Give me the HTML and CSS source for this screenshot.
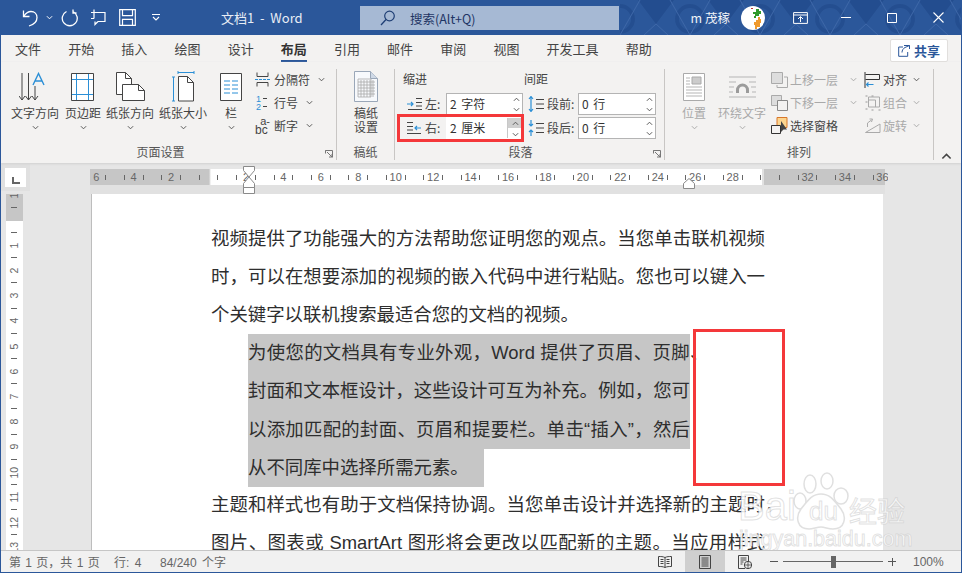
FILE: index.html
```html
<!DOCTYPE html>
<html lang="zh-CN">
<head>
<meta charset="utf-8">
<title>文档1 - Word</title>
<link rel="stylesheet" href="styles.css">
</head>
<body>
<svg class="defs" width="0" height="0" aria-hidden="true">
  <symbol id="chev" viewBox="0 0 8 5"><path d="M1 1l3 3 3-3" fill="none" stroke="currentColor" stroke-width="1.1"/></symbol>
  <symbol id="chevup" viewBox="0 0 8 5"><path d="M1 4l3-3 3 3" fill="none" stroke="currentColor" stroke-width="1.1"/></symbol>
  <symbol id="launch" viewBox="0 0 8 8"><path d="M.5.5h7v7M.5.5v3M.5.5h3M2 2l5 5M7 4v3H4" fill="none" stroke="#777" stroke-width="1"/></symbol>
</svg>
<div class="app">
  <header class="titlebar">
    <svg class="hexes" width="342" height="35" viewBox="0 0 342 35" aria-hidden="true">
      <defs>
        <pattern id="hex" width="70" height="35" patternUnits="userSpaceOnUse" x="0">
          <path d="M18 0l18 24 18-24z" fill="#234d8f"/>
          <circle cx="0" cy="19" r="13" fill="none" stroke="#244e90" stroke-width="4"/>
          <circle cx="70" cy="19" r="13" fill="none" stroke="#244e90" stroke-width="4"/>
          <path d="M0 35l20-35M70 35L50 0M36 24l-12 11M36 24l12 11" stroke="#3d67a8" stroke-width="1" fill="none"/>
        </pattern>
      </defs>
      <rect width="342" height="35" fill="url(#hex)"/>
    </svg>
    <div class="qat">
      <svg class="q-undo" width="17" height="18" viewBox="0 0 17 18"><path d="M1.5 1.5v6h6M2 7c2-3 4-4.500 7-4.500 3.500 0 6 2.500 6 6 0 4-3 7-8 8.500" fill="none" stroke="#fff" stroke-width="1.3"/></svg>
      <svg class="q-chev" width="7" height="5"><use href="#chev"/></svg>
      <svg class="q-redo" width="18" height="18" viewBox="0 0 18 18"><path d="M11.500 2.500A7.500 7.500 0 1 1 5 2.500M5 .5v3.500H1.500" fill="none" stroke="#fff" stroke-width="1.3" transform="matrix(-1 0 0 1 18 0)"/></svg>
      <svg class="q-touch" width="16" height="17" viewBox="0 0 16 17"><path d="M4 3.500h11v9H8M5 12.500v3l3-3M4 .5v9M1 3.500h3M1 9.500h3" fill="none" stroke="#fff" stroke-width="1.200"/></svg>
      <svg class="q-save" width="17" height="17" viewBox="0 0 17 17"><path d="M.7.7h15.600v15.600H.7zM3.500.7v6h10v-6M3.500 16.300v-6h10v6" fill="none" stroke="#fff" stroke-width="1.200"/></svg>
      <svg class="q-more" width="8" height="7" viewBox="0 0 8 7"><path d="M0 .5h8M1 3l3 3 3-3" fill="none" stroke="#fff" stroke-width="1.100"/></svg>
    </div>
    <div class="doc-title">文档1&nbsp; -&nbsp; Word</div>
    <div class="search">
      <svg width="15" height="16" viewBox="0 0 15 16"><circle cx="9.500" cy="6" r="4.800" fill="none" stroke="#1f3f75" stroke-width="1.200"/><path d="M6 9.500L1 15" stroke="#1f3f75" stroke-width="1.300"/></svg>
      <span>搜索(Alt+Q)</span>
    </div>
    <div class="win">
      <span class="user">m 茂稼</span>
      <svg class="avatar" width="24" height="24" viewBox="0 0 24 24">
        <circle cx="12" cy="12" r="12" fill="#fff"/>
        <path d="M10 2h2v1h-2z" fill="#c0392b"/>
        <path d="M15 3h3v2h2v3h-2v2h-3v2h-2v-2h1V8h-2V6h3z" fill="#2f9a2b"/>
        <path d="M17 11h2v2h1v4h-1v4h-3v2h-2v-4h-1v-3h2v-2h2z" fill="#ef9a2d"/>
      </svg>
      <button class="wbtn"><svg width="15" height="12" viewBox="0 0 15 12"><path d="M.6.6h13.800v10.800H.6zM.6 3h13.800M7.500 10V5M5 7l2.500-2.500L10 7" fill="none" stroke="#fff"/></svg></button>
      <button class="wbtn"><svg width="10" height="1" viewBox="0 0 10 1"><path d="M0 .5h10" stroke="#fff"/></svg></button>
      <button class="wbtn"><svg width="10" height="10" viewBox="0 0 10 10"><path d="M.5.5h9v9h-9z" fill="none" stroke="#fff"/></svg></button>
      <button class="wbtn"><svg width="11" height="11" viewBox="0 0 11 11"><path d="M.5.500l10 10M10.500.500l-10 10" stroke="#fff" stroke-width="1.100"/></svg></button>
    </div>
  </header>

  <nav class="tabs">
    <span>文件</span><span>开始</span><span>插入</span><span>绘图</span><span>设计</span><span class="on">布局</span><span>引用</span><span>邮件</span><span>审阅</span><span>视图</span><span>开发工具</span><span>帮助</span>
    <button class="share">
      <svg width="12" height="13" viewBox="0 0 12 13"><path d="M6 1.500h5.500v3.500M5 3H.7v9.300h9V8M11.500 1.500L7 3.500c-2 1-3 3-3 5" fill="none" stroke="#2b579a" stroke-width="1"/></svg>
      共享
    </button>
  </nav>

  <section class="ribbon">
    <div class="group g-page">
      <div class="body">
        <div class="big b1">
          <div class="ico"><svg width="32" height="30" viewBox="0 0 32 30"><path d="M3 1v27M0 24l3 4 3-4M9.500 1v27M6.500 24l3 4 3-4M16 14v14M13 24l3 4 3-4" fill="none" stroke="#444" stroke-width="1"/><path d="M15 12L20.500.5 26 12M17 8h7" fill="none" stroke="#2b8fd6" stroke-width="1.400" transform="translate(-1 1)"/></svg></div>
          <div class="lbl">文字方向</div><svg class="chev" width="7" height="5"><use href="#chev"/></svg>
        </div>
        <div class="big b2">
          <div class="ico"><svg width="24" height="28" viewBox="0 0 24 28"><path d="M.5.500h22v27H.5z" fill="#fff" stroke="#444"/><path d="M5.500 1v26M17.500 1v26M1 6.500h21M1 21.500h21" stroke="#2b8fd6" fill="none"/></svg></div>
          <div class="lbl">页边距</div><svg class="chev" width="7" height="5"><use href="#chev"/></svg>
        </div>
        <div class="big b3">
          <div class="ico"><svg width="29" height="29" viewBox="0 0 29 29"><path d="M.5.500h9l6 6v16H.5z" fill="#fff" stroke="#444"/><path d="M9.500.5v6h6" fill="none" stroke="#444"/><path d="M6.500 12.500h16l6 6v10h-22z" fill="#fff" stroke="#444"/><path d="M22.500 12.500v6h6" fill="none" stroke="#444"/></svg></div>
          <div class="lbl">纸张方向</div><svg class="chev" width="7" height="5"><use href="#chev"/></svg>
        </div>
        <div class="big b4">
          <div class="ico"><svg width="23" height="31" viewBox="0 0 23 31"><path d="M6 1.500h16M6 0v3M22 0v3M1.500 6v24M0 6h3M0 30h3" stroke="#2b8fd6" fill="none"/><path d="M6.500 5.500h9l6 6v18.500h-15z" fill="#fff" stroke="#444"/><path d="M15.500 5.500v6h6" fill="none" stroke="#444"/></svg></div>
          <div class="lbl">纸张大小</div><svg class="chev" width="7" height="5"><use href="#chev"/></svg>
        </div>
        <div class="big b5">
          <div class="ico"><svg width="22" height="28" viewBox="0 0 22 28"><path d="M.5.500h21v27H.5z" fill="#fff" stroke="#444"/><path d="M4 8h6M12 8h6M4 12h6M12 12h6M4 16h6M12 16h6M4 20h6M12 20h6" stroke="#2b8fd6"/></svg></div>
          <div class="lbl">栏</div><svg class="chev" width="7" height="5"><use href="#chev"/></svg>
        </div>
        <div class="smalls s-page">
          <div class="small"><svg width="15" height="15" viewBox="0 0 15 15"><path d="M2 .5v4h11v-4M2 14.500v-4h11v4" fill="none" stroke="#444"/><path d="M0 7.500h15" stroke="#2b8fd6" stroke-dasharray="3 1"/></svg><span>分隔符</span><svg class="chev" width="7" height="5"><use href="#chev"/></svg></div>
          <div class="small"><svg class="num" width="15" height="16" viewBox="0 0 15 16"><text x="1" y="7" class="numt">1</text><text x="1" y="15" class="numt">2</text><path d="M8 3.500h4M8 11.500h4" stroke="#444"/></svg><span>行号</span><svg class="chev" width="7" height="5"><use href="#chev"/></svg></div>
          <div class="small"><span class="abc"><i>a-</i><b>bc</b></span><span>断字</span><svg class="chev" width="7" height="5"><use href="#chev"/></svg></div>
        </div>
      </div>
      <div class="glabel gl-page">页面设置</div>
      <svg class="launch" width="8" height="8"><use href="#launch"/></svg>
    </div>

    <div class="group g-paper">
      <div class="body">
        <div class="big b6">
          <div class="ico"><svg width="24" height="31" viewBox="0 0 24 31"><path d="M.5.500h16l7 7v23H.5z" fill="#f7f9fc" stroke="#9aa7b8"/><path d="M16.500.5v7h7" fill="#cfd9e6" stroke="#9aa7b8"/><path d="M4 8h13v18H4zM4 11h17M4 14h17M4 17h17M4 20h17M4 23h17M7 9v17M10 9v17M13 9v17M16 9v17M19 9v17" fill="none" stroke="#a9a9a9" stroke-width=".8"/></svg></div>
          <div class="lbl">稿纸<br>设置</div>
        </div>
      </div>
      <div class="glabel">稿纸</div>
    </div>

    <div class="group g-para">
      <div class="body">
        <div class="para">
          <div class="phead p-a">缩进</div><div class="phead">间距</div>
          <div class="field f-l">
            <svg width="15" height="12" viewBox="0 0 15 12"><path d="M9 .5h6M9 4.500h6M9 8h6M1 11.500h14" stroke="#444" fill="none"/><path d="M0 6h6M4 4l2 2-2 2" stroke="#2b8fd6" fill="none" stroke-width="1.200"/></svg>
            <span class="flab">左:</span>
            <div class="input"><span>2 字符</span><div class="spin"><svg width="7" height="5"><use href="#chevup"/></svg><svg width="7" height="5"><use href="#chev"/></svg></div></div>
          </div>
          <div class="field f-r">
            <svg width="17" height="16" viewBox="0 0 17 16"><path d="M9 3.500h8M9 8h8M9 12.500h8" stroke="#444"/><path d="M4 1v14M2 3l2-2.500L6 3M2 13l2 2.500L6 13" stroke="#2b8fd6" fill="none" stroke-width="1.200"/></svg>
            <span class="flab">段前:</span>
            <div class="input"><span>0 行</span><div class="spin"><svg width="7" height="5"><use href="#chevup"/></svg><svg width="7" height="5"><use href="#chev"/></svg></div></div>
          </div>
          <div class="field f-l marked">
            <svg width="15" height="12" viewBox="0 0 15 12"><path d="M0 .5h6M0 4.500h6M0 8h6M0 11.500h14" stroke="#444" fill="none"/><path d="M14 6H8M10 4L8 6l2 2" stroke="#2b8fd6" fill="none" stroke-width="1.200"/></svg>
            <span class="flab">右:</span>
            <div class="input"><span>2 厘米</span><div class="spin active"><svg class="up" width="7" height="5"><use href="#chevup"/></svg><svg width="7" height="5"><use href="#chev"/></svg></div></div>
          </div>
          <div class="field f-r">
            <svg width="17" height="16" viewBox="0 0 17 16"><path d="M9 3.500h8M9 8h8M9 12.500h8" stroke="#444"/><path d="M4 0v6M2 4l2 2 2-2M4 10v6M2 12l2-2 2 2" stroke="#2b8fd6" fill="none" stroke-width="1.200"/></svg>
            <span class="flab">段后:</span>
            <div class="input"><span>0 行</span><div class="spin"><svg width="7" height="5"><use href="#chevup"/></svg><svg width="7" height="5"><use href="#chev"/></svg></div></div>
          </div>
        </div>
      </div>
      <div class="glabel gl-para">段落</div>
      <svg class="launch" width="8" height="8"><use href="#launch"/></svg>
    </div>

    <div class="group g-arr">
      <div class="body">
        <div class="big b7 dis">
          <div class="ico"><svg width="22" height="28" viewBox="0 0 22 28"><path d="M.5.500h21v27H.5z" fill="#fff" stroke="#aaa"/><path d="M9 4h9v7H9z" fill="#ccc" stroke="#aaa"/><path d="M3 5h4M3 8h4M3 11h4M3 14h16M3 17h16M3 20h16M3 23h16" stroke="#b5b5b5"/></svg></div>
          <div class="lbl">位置</div><svg class="chev" width="7" height="5"><use href="#chev"/></svg>
        </div>
        <div class="big b8 dis">
          <div class="ico"><svg width="29" height="24" viewBox="0 0 29 24"><path d="M1 2h27M1 7h7M21 7h7M1 12h5M23 12h5M1 17h4M24 17h4M1 22h27" stroke="#b5b5b5"/><path d="M8 18v-3a6.500 6.500 0 0 1 13 0v3h-3v-3a3.500 3.500 0 0 0-7 0v3z" fill="#9b9b9b"/></svg></div>
          <div class="lbl">环绕文字</div><svg class="chev" width="7" height="5"><use href="#chev"/></svg>
        </div>
        <div class="smalls s-arr1">
          <div class="small dis"><svg width="17" height="16" viewBox="0 0 17 16"><path d="M.5.500h11v11H.5z" fill="#ddd" stroke="#aaa"/><path d="M13 5h3.500v10.500H6V13" fill="none" stroke="#aaa"/></svg><span>上移一层</span><svg class="chev" width="7" height="5"><use href="#chev"/></svg></div>
          <div class="small dis"><svg width="17" height="16" viewBox="0 0 17 16"><path d="M.5.500h10v10H.5z" fill="#ddd" stroke="#aaa"/><path d="M6.500 5.500h10v10h-10z" fill="#f3f2f1" stroke="#888"/></svg><span>下移一层</span><svg class="chev" width="7" height="5"><use href="#chev"/></svg></div>
          <div class="small"><svg width="17" height="17" viewBox="0 0 17 17"><path d="M6 .5h10v10H6z" fill="#fcd58f" stroke="#d8772a"/><path d="M.5 8.500h9v8h-9z" fill="#f3f2f1" stroke="#333"/><path d="M10 4v11l2.500-2.500H16z" fill="#444"/></svg><span>选择窗格</span></div>
        </div>
        <div class="smalls s-arr2">
          <div class="small"><svg width="17" height="16" viewBox="0 0 16 16"><path d="M.5 0v16" stroke="#333"/><path d="M1 2.500h14v5H1" fill="none" stroke="#333"/><path d="M9 12.500H2M4 10.500l-2 2 2 2" fill="none" stroke="#2b8fd6" stroke-width="1.200"/></svg><span>对齐</span><svg class="chev" width="7" height="5"><use href="#chev"/></svg></div>
          <div class="small dis"><svg width="17" height="16" viewBox="0 0 16 16"><path d="M4 2h11v10H4z" fill="none" stroke="#aaa"/><path d="M4 5h7v7" fill="none" stroke="#aaa"/><path d="M1 1h2M1 7h2M1 14h2M7 1h2M7 15h2M14 15h2" stroke="#999"/></svg><span>组合</span><svg class="chev" width="7" height="5"><use href="#chev"/></svg></div>
          <div class="small dis"><svg width="17" height="15" viewBox="0 0 16 15"><path d="M1 14.500L15.500 6v8.500zM3 9V5l4-3M5 1L8 1l-1 3" fill="none" stroke="#aaa"/></svg><span>旋转</span><svg class="chev" width="7" height="5"><use href="#chev"/></svg></div>
        </div>
      </div>
      <div class="glabel">排列</div>
    </div>
    <svg class="collapse" width="11" height="7"><use href="#chevup"/></svg>
  </section>

  <main class="workspace">
    <div class="rulerbar">
      <div class="corner"><span class="tabmark"></span></div>
      <div class="hruler">
        <div class="rcell">6</div><div class="rcell">4</div><div class="rcell">2</div><div class="rcell"></div><div class="rcell">2</div><div class="rcell">4</div><div class="rcell">6</div><div class="rcell">8</div><div class="rcell">10</div><div class="rcell">12</div><div class="rcell">14</div><div class="rcell">16</div><div class="rcell">18</div><div class="rcell">20</div><div class="rcell">22</div><div class="rcell">24</div><div class="rcell">26</div><div class="rcell">28</div><div class="rcell"></div><div class="rcell">32</div><div class="rcell">34</div><div class="rcell">36</div>
      </div>
      <svg class="marker-l" width="12" height="28" viewBox="0 0 12 28"><path d="M.5.500h11v4L6 11 .5 4.500zM6 11l5.500 6.500v4h-11v-4zM.5 21.500h11v6H.5z" fill="#fff" stroke="#8a8a8a"/></svg>
      <svg class="marker-r" width="12" height="11" viewBox="0 0 12 11"><path d="M6 .5l5.500 5v5H.5v-5z" fill="#fff" stroke="#8a8a8a"/></svg>
    </div>
    <div class="docrow">
      <div class="vcol">
        <div class="vruler">
          <div class="vcell"><span>1</span></div><div class="vcell"><span></span></div><div class="vcell"><span>1</span></div><div class="vcell"><span>2</span></div><div class="vcell"><span>3</span></div><div class="vcell"><span>4</span></div><div class="vcell"><span>5</span></div><div class="vcell"><span>6</span></div><div class="vcell"><span>7</span></div><div class="vcell"><span>8</span></div><div class="vcell"><span>9</span></div><div class="vcell"><span>10</span></div><div class="vcell"><span>11</span></div><div class="vcell"><span>12</span></div><div class="vcell"><span>13</span></div>
        </div>
      </div>
      <article class="page">
        <p class="ln just">视频提供了功能强大的方法帮助您证明您的观点。当您单击联机视频</p>
        <p class="ln just">时，可以在想要添加的视频的嵌入代码中进行粘贴。您也可以键入一</p>
        <p class="ln">个关键字以联机搜索最适合您的文档的视频。</p>
        <div class="sel">
          <p class="hl just">为使您的文档具有专业外观，Word 提供了页眉、页<span class="nb">脚<span class="hang">、</span></span></p>
          <p class="hl just">封面和文本框设计，这些设计可互为补充。例如，您可</p>
          <p class="hl just">以添加匹配的封面、页眉和提要栏。单击“插入”，然后</p>
          <p class="hl last">从不同库中选择所需元素。</p>
        </div>
        <p class="ln just">主题和样式也有助于文档保持协调。当您单击设计并选择新的主题<span class="nb">时<span class="hang">，</span></span></p>
        <p class="ln just">图片、图表或 SmartArt 图形将会更改以匹配新的主题。当应用样式</p>
        <div class="redbox"></div>
      </article>
    </div>
    <div class="watermark" aria-hidden="true">
      <svg class="paw" width="58" height="62" viewBox="0 0 58 62"><g fill="#fff" stroke="#d6d6d6" stroke-width="1.500"><ellipse cx="17" cy="12" rx="6" ry="9"/><ellipse cx="34" cy="9" rx="6" ry="8"/><ellipse cx="7" cy="29" rx="6" ry="8"/><ellipse cx="48" cy="24" rx="7" ry="8"/><path d="M28 22c10 0 14 8 20 15 6 8 4 20-8 20-5 0-8-2-12-2s-8 2-12 2c-12 0-14-12-8-20 6-7 10-15 20-15z"/></g></svg>
      <span class="wm-bai">Bai</span><span class="wm-du">du</span><span class="wm-cn">经验</span>
      <span class="wm-url">jingyan.baidu.com</span>
    </div>
  </main>

  <footer class="status">
    <span class="st1">第 1 页，共 1 页</span><span class="st2">行: 4</span><span class="st3">84/240 个字</span>
    <div class="views">
      <span class="view"><svg width="14" height="12" viewBox="0 0 14 12"><path d="M7 1.500C5 .5 3 .5.500.5v10c2.500 0 4.500 0 6.500 1 2-1 4-1 6.500-1V.5C11 .5 9 .5 7 1.500zM7 1.500v10M2.500 3.500h3M2.500 5.500h3M2.500 7.500h3M8.500 3.500h3M8.500 5.500h3M8.500 7.500h3" fill="none" stroke="#444"/></svg></span>
      <span class="view active"><svg width="12" height="14" viewBox="0 0 12 14"><path d="M.5.500h11v13H.5zM2.500 3h7M2.500 5h7M2.500 7h7M2.500 9h7M2.500 11h7" fill="none" stroke="#444"/></svg></span>
      <span class="view"><svg width="14" height="14" viewBox="0 0 14 14"><path d="M7 13.500H.5V.5h10v6M2.500 3h6M2.500 5h6M2.500 7h3M2.500 9h2" fill="none" stroke="#444"/><circle cx="10" cy="10" r="3.700" fill="#f1f1f1" stroke="#444"/><path d="M6.500 10h7M10 6.500v7" stroke="#444" stroke-width=".8"/></svg></span>
    </div>
    <div class="zoom">
      <i class="zm"></i>
      <div class="slider"><b></b></div>
      <i class="zp"></i>
      <span class="pct">100%</span>
    </div>
  </footer>
</div>
</body>
</html>
```

FILE: styles.css
```css
* { box-sizing: border-box; }
html, body { margin: 0; padding: 0; }
body { width: 962px; height: 573px; overflow: hidden; font-family: "Liberation Sans", "Noto Sans CJK SC", sans-serif; background: #fff; }
.defs { position: absolute; }
p { margin: 0; }
button { font: inherit; border: 0; background: none; padding: 0; }

.app { width: 962px; height: 573px; display: flex; flex-direction: column; border: 1px solid #2b579a; border-top: 0; overflow: hidden; position: relative; }

/* title bar */
.titlebar { height: 35px; flex: none; background: #2b579a; display: flex; align-items: center; color: #fff; position: relative; margin: 0 -1px; padding: 0 1px; }
.hexes { position: absolute; right: 0; top: 0; }
.qat { width: 220px; display: flex; align-items: center; padding-left: 21px; position: relative; color: #fff; }
.q-chev { margin-left: 7px; }
.q-redo { margin-left: 7px; }
.q-touch { margin-left: 12px; }
.q-save { margin-left: 13px; }
.q-more { margin-left: 16px; }
.doc-title { width: 139px; font: 13px/33px "Noto Sans CJK SC", sans-serif; position: relative; color: #e8edf5; }
.search { width: 259px; height: 24px; margin-top: 1px; background: #a6b9d4; display: flex; align-items: center; padding-left: 20px; position: relative; color: #1f3564; font: 12.5px "Noto Sans CJK SC", sans-serif; }
.search span { margin-left: 15px; }
.win { flex: 1; display: flex; align-items: center; justify-content: flex-end; position: relative; height: 35px; }
.user { font: 12.5px "Noto Sans CJK SC", sans-serif; margin-right: 11px; color: #f0f3f8; }
.avatar { margin-right: 12px; }
.wbtn { width: 46px; height: 35px; display: flex; align-items: center; justify-content: center; }

/* tabs */
.tabs { height: 27px; flex: none; background: #f3f2f1; display: flex; padding-left: 14px; gap: 27.15px; font: 13px/28px "Noto Sans CJK SC", sans-serif; color: #444; }
.tabs > span { height: 27px; border-bottom: 2px solid transparent; }
.tabs .on { font-weight: 700; color: #333; border-bottom-color: #2b579a; }
.share { margin: 4px 13px 0 auto; width: 58px; height: 23px; background: #fff; border: 1px solid #e1dfdd; border-radius: 2px; display: flex; align-items: center; gap: 4px; padding-left: 7px; color: #2b579a; font: 700 13px "Noto Sans CJK SC", sans-serif; }

/* ribbon */
.ribbon { height: 101px; flex: none; background: #f3f2f1; display: flex; padding-top: 7px; position: relative; font: 12px/14px "Noto Sans CJK SC", sans-serif; color: #444; box-shadow: 0 1px 2px #d0d0d0; z-index: 2; }
.group { height: 91px; border-right: 1px solid #c8c6c4; position: relative; flex: none; display: flex; flex-direction: column; }
.g-page { width: 336px; }
.g-paper { width: 58px; }
.g-para { width: 270px; }
.g-arr { width: 269px; }
.body { height: 74px; display: flex; }
.glabel { text-align: center; line-height: 16px; margin-top: 1px; color: #555; }
.gl-page { padding-right: 16px; }
.gl-para { padding-right: 18px; }
.launch { position: absolute; right: 3px; bottom: 2px; }
.collapse { position: absolute; right: 9px; bottom: 3px; color: #444; }

.big { width: 48px; flex: none; display: flex; flex-direction: column; align-items: center; white-space: nowrap; }
.ico { height: 37px; display: flex; align-items: center; justify-content: center; padding-bottom: 2px; }
.lbl { text-align: center; height: 14px; }
.chev { flex: none; color: #555; }
.big .chev { margin-top: 5px; }
.b1 { margin-left: 10px; }
.b3 { margin-left: -1px; }
.b4 { margin-left: 5px; }
.b6 { margin-left: 5px; }
.b7 { margin-left: 5px; }
.b8 { margin-right: 5px; }
.dis { color: #a9a9a9; }
.dis .chev { color: #a9a9a9; }

.smalls { display: flex; flex-direction: column; margin-top: -1px; }
.small { height: 23px; display: flex; align-items: center; gap: 2px; white-space: nowrap; }
.s-page .small { gap: 4px; }
.small .chev { margin-left: 4px; }
.s-arr1 { width: 93px; }
.s-arr1 .chev { margin-left: 10px; }
.numt { font: 9px "Liberation Sans", sans-serif; fill: #2b8fd6; }
.abc { width: 15px; height: 18px; font: 11px/9px "Liberation Sans", sans-serif; color: #444; display: flex; flex-direction: column; align-items: flex-end; }
.abc i { font-style: normal; }
.abc b { font-weight: 400; align-self: flex-start; font-size: 12px; }

/* paragraph group */
.para { display: grid; grid-template-columns: 128px 133px; grid-template-rows: 24px 24px 22px; padding-left: 1px; height: 74px; align-content: start; }
.phead { line-height: 20px; color: #444; }
.p-a { padding-left: 7px; }
.field { height: 22px; display: flex; align-items: center; position: relative; }
.f-l { padding-left: 11px; }
.f-r { padding-left: 3px; }
.flab { color: #444; white-space: nowrap; }
.f-l .flab { margin-left: 3px; width: 21px; }
.f-r .flab { margin-left: 3px; width: 31px; }
.input { height: 22px; width: 78px; background: #fff; border: 1px solid #b4b4b4; display: flex; justify-content: space-between; align-items: center; padding-left: 3px; color: #333; word-spacing: 2px; }
.f-l .input { width: 77px; }
.spin { width: 12px; height: 20px; display: flex; flex-direction: column; align-items: center; justify-content: space-around; color: #555; }
.spin svg { display: block; }
.spin.active { width: 15px; border-left: 1px solid #c8c8c8; justify-content: flex-start; gap: 6px; background: linear-gradient(#cfcfcf 0 10px, #fff 10px); padding-top: 3px; }
.marked .input { border-color: #fff; }
.marked::after { content: ""; position: absolute; left: 1px; right: 0; top: -3px; bottom: -3px; border: 3px solid #f4383a; }

/* workspace */
.workspace { flex: 1; min-height: 0; background: #e6e6e6; display: flex; flex-direction: column; position: relative; overflow: hidden; }
.rulerbar { height: 31px; flex: none; position: relative; display: flex; }
.corner { width: 29px; height: 27px; margin-top: 1px; background: #e0e0e0; padding: 4px; display: flex; }
.tabmark { width: 21px; height: 19px; background: #fff; position: relative; display: block; }
.tabmark::after { content: ""; position: absolute; left: 7px; top: 9px; width: 6px; height: 5px; border-left: 2px solid #666; border-bottom: 2px solid #666; }
.rulerbar::after { content: ""; position: absolute; left: 89px; width: 795px; top: 6px; bottom: 0; background: #e1e1e1; z-index: 0; }
.hruler { position: absolute; z-index: 1; left: 89px; top: 6px; width: 798px; height: 16px; overflow: hidden; display: flex; background: linear-gradient(90deg, #c6c6c6 0 119px, #fff 121px 672px, #e1e1e1 672px 674px, #c6c6c6 674px 795px, transparent 795px); }
.rcell { width: 37.44px; flex: none; display: flex; align-items: center; justify-content: space-between; padding: 0 8.86px; font-size: 11px; color: #666; }
.rcell:first-child { margin-left: -12.5px; }
.rcell::before, .rcell::after { content: ""; width: 1px; height: 5px; background: #666; flex: none; }
.marker-l { position: absolute; z-index: 3; left: 242px; top: 3px; }
.marker-r { position: absolute; z-index: 3; left: 682px; top: 15px; }

.docrow { flex: 1; min-height: 0; display: flex; }
.vcol { width: 91px; flex: none; padding-left: 5px; border-right: 1px solid #bdbdbd; }
.vruler { width: 17px; height: 100%; overflow: hidden; background: linear-gradient(#c6c6c6 0 27px, #fff 27px); }
.vcell { height: 25.2px; position: relative; font-size: 10.5px; color: #666; }
.vcell:first-child { margin-top: -5.5px; }
.vcell span { display: block; height: 12.6px; line-height: 17px; white-space: nowrap; writing-mode: vertical-rl; transform: rotate(180deg); text-align: center; }
.vcell::after { content: ""; position: absolute; left: 5px; width: 6px; height: 1px; top: 18.4px; background: #666; }

.page { width: 791px; height: 100%; flex: none; background: #fff; padding: 26px 0 0 119px; overflow: hidden; position: relative; font: 18.4px/38px "Liberation Sans", "Noto Sans CJK SC", sans-serif; color: #2e2e2e; }
.ln { height: 38px; width: 554px; white-space: nowrap; }
.just { text-align: justify; text-align-last: justify; white-space: normal; }
.nb { white-space: nowrap; }
.hang { display: inline-block; width: 0; }
.sel { margin-left: 37px; width: 442px; }
.hl { width: 442px; height: 38.25px; line-height: 38px; background: #c6c6c6; }
.hl.last { width: 236px; white-space: nowrap; }
.sel + .ln { margin-top: -1px; }
.redbox { position: absolute; left: 601px; top: 135px; width: 92px; height: 157px; border: 3px solid #f4383a; }

.watermark { position: absolute; left: 736px; top: 306px; width: 180px; height: 81px; z-index: 4; overflow: hidden; color: rgba(255,255,255,.88); -webkit-text-stroke: 1px rgba(190,190,190,.45); font-family: "Liberation Sans", sans-serif; }
.paw { position: absolute; left: 56px; top: 3px; opacity: .75; }
.wm-bai { position: absolute; left: 1px; top: 17px; font-size: 40px; line-height: 40px; }
.wm-du { position: absolute; left: 72px; top: 27px; font-size: 26px; line-height: 30px; }
.wm-cn { position: absolute; left: 112px; top: 24px; font: 28px/34px "Noto Sans CJK SC", sans-serif; }
.wm-url { position: absolute; left: 2px; top: 57px; font-size: 21.5px; line-height: 26px; white-space: nowrap; }

/* status */
.status { height: 22px; flex: none; background: #f1f1f1; border-top: 1px solid #c6c6c6; display: flex; align-items: center; font: 12px "Liberation Sans", "Noto Sans CJK SC", sans-serif; color: #666; position: relative; z-index: 3; word-spacing: 2px; }
.st1 { margin-left: 8px; width: 105px; word-spacing: 1px; }
.st2 { width: 46px; }
.views { margin-left: auto; display: flex; height: 21px; }
.view { width: 40px; height: 21px; display: flex; align-items: center; justify-content: center; }
.view.active { background: #cfcfcf; }
.zoom { width: 196px; display: flex; align-items: center; padding-left: 5px; height: 21px; }
.zm, .zp { width: 8px; height: 8px; flex: none; background: linear-gradient(#555,#555) center/8px 1px no-repeat; }
.zp { background: linear-gradient(#555,#555) center/8px 1px no-repeat, linear-gradient(#555,#555) center/1px 8px no-repeat; }
.slider { width: 100px; height: 1px; background: #666; margin: 0 5px; flex: none; display: flex; justify-content: center; align-items: center; }
.slider b { width: 5px; height: 12px; background: #666; flex: none; }
.pct { margin-left: 17px; }
```
